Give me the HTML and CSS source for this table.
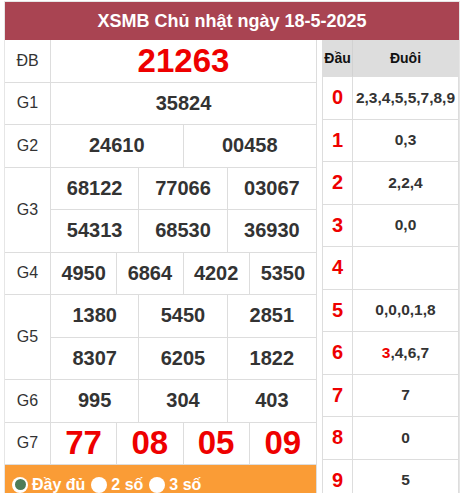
FILE: index.html
```html
<!DOCTYPE html>
<html lang="vi">
<head>
<meta charset="utf-8">
<title>XSMB</title>
<link rel="stylesheet" href="styles.css">
</head>
<body>
<div class="board">
  <div class="title">XSMB Chủ nhật ngày 18-5-2025</div>
  <div class="content">
    <div class="results">
      <div class="row"><div class="label">ĐB</div><div class="nums c1"><span class="special">21263</span></div></div>
      <div class="row"><div class="label">G1</div><div class="nums c1"><span>35824</span></div></div>
      <div class="row"><div class="label">G2</div><div class="nums c2"><span>24610</span><span>00458</span></div></div>
      <div class="row"><div class="label">G3</div><div class="nums c3"><span>68122</span><span>77066</span><span>03067</span><span>54313</span><span>68530</span><span>36930</span></div></div>
      <div class="row"><div class="label">G4</div><div class="nums c4"><span>4950</span><span>6864</span><span>4202</span><span>5350</span></div></div>
      <div class="row"><div class="label">G5</div><div class="nums c3"><span>1380</span><span>5450</span><span>2851</span><span>8307</span><span>6205</span><span>1822</span></div></div>
      <div class="row"><div class="label">G6</div><div class="nums c3"><span>995</span><span>304</span><span>403</span></div></div>
      <div class="row"><div class="label">G7</div><div class="nums c4 big"><span>77</span><span>08</span><span>05</span><span>09</span></div></div>
      <div class="options">
        <label class="opt"><i class="radio on"></i>Đầy đủ</label>
        <label class="opt"><i class="radio"></i>2 số</label>
        <label class="opt"><i class="radio"></i>3 số</label>
      </div>
    </div>
    <div class="loto">
      <div class="head">Đầu</div><div class="head">Đuôi</div>
      <div class="d">0</div><div class="t">2,3,4,5,5,7,8,9</div>
      <div class="d">1</div><div class="t">0,3</div>
      <div class="d">2</div><div class="t">2,2,4</div>
      <div class="d">3</div><div class="t">0,0</div>
      <div class="d">4</div><div class="t"></div>
      <div class="d">5</div><div class="t">0,0,0,1,8</div>
      <div class="d">6</div><div class="t"><b class="hl">3</b>,4,6,7</div>
      <div class="d">7</div><div class="t">7</div>
      <div class="d">8</div><div class="t">0</div>
      <div class="d">9</div><div class="t">5</div>
    </div>
  </div>
</div>
</body>
</html>
```

FILE: styles.css
```css
* { box-sizing: border-box; }
html, body { margin: 0; padding: 0; background: #fff; }
body {
  font-family: "Liberation Sans", Arial, sans-serif;
  color: #333;
  overflow: hidden;
}
.board {
  margin: 1px 0 0 4px;
  width: 456px;
  border: 1px solid #e6e6e6;
  border-bottom: 0;
}
.title {
  height: 38px;
  background: #a94452;
  color: #fff;
  font-weight: bold;
  font-size: 18px;
  display: flex;
  align-items: center;
  justify-content: center;
}
.content {
  display: flex;
  align-items: flex-start;
}
.results {
  width: 312px;
  border-right: 1px solid #ddd;
}
.row {
  display: flex;
}
.label {
  width: 46px;
  flex: none;
  border-right: 1px solid #ddd;
  border-bottom: 1px solid #ddd;
  display: flex;
  align-items: center;
  justify-content: center;
  font-size: 16px;
  color: #333;
}
.nums {
  flex: 1;
  display: grid;
}
.c1 { grid-template-columns: 1fr; }
.c2 { grid-template-columns: 1fr 1fr; }
.c3 { grid-template-columns: 1fr 1fr 1fr; }
.c4 { grid-template-columns: 1fr 1fr 1fr 1fr; }
.nums span {
  height: 42.5px;
  border-bottom: 1px solid #ddd;
  border-right: 1px solid #ddd;
  display: flex;
  align-items: center;
  justify-content: center;
  font-weight: bold;
  font-size: 20px;
  color: #333;
}
.c1 span:nth-child(1n),
.c2 span:nth-child(2n),
.c3 span:nth-child(3n),
.c4 span:nth-child(4n) { border-right: 0; }
.nums .special { font-size: 33px; color: #ee0000; }
.big span { font-size: 33px; color: #ee0000; }
.options {
  background: #fa9c36;
  height: 40px;
  display: flex;
  align-items: flex-start;
  padding: 11px 0 0 7px;
  gap: 6px;
}
.opt {
  display: flex;
  align-items: center;
  gap: 4px;
  color: #fff;
  font-weight: bold;
  font-size: 16px;
  line-height: 17px;
}
.radio {
  width: 16px;
  height: 16px;
  border-radius: 50%;
  background: #fff;
  display: flex;
  align-items: center;
  justify-content: center;
}
.radio.on::after {
  content: "";
  width: 11px;
  height: 11px;
  border-radius: 50%;
  background: #4e7c58;
}
.loto {
  margin-left: 5px;
  width: 137px;
  display: grid;
  grid-template-columns: 30px 1fr;
  grid-template-rows: 37px;
  grid-auto-rows: 42.5px;
  border-left: 1px solid #ddd;
  border-right: 1px solid #ddd;
}
.loto > div {
  display: flex;
  align-items: center;
  justify-content: center;
  border-bottom: 1px solid #ddd;
  font-weight: bold;
}
.loto .head {
  background: #ddd;
  font-size: 14px;
  color: #111;
}
.loto .head:first-child { border-right: 1px solid #d2d2d2; }
.loto .d {
  border-right: 1px solid #ddd;
  color: #ee0000;
  font-size: 20px;
}
.loto .t {
  font-size: 15.5px;
  color: #333;
}
.hl { color: #ee0000; }
```
